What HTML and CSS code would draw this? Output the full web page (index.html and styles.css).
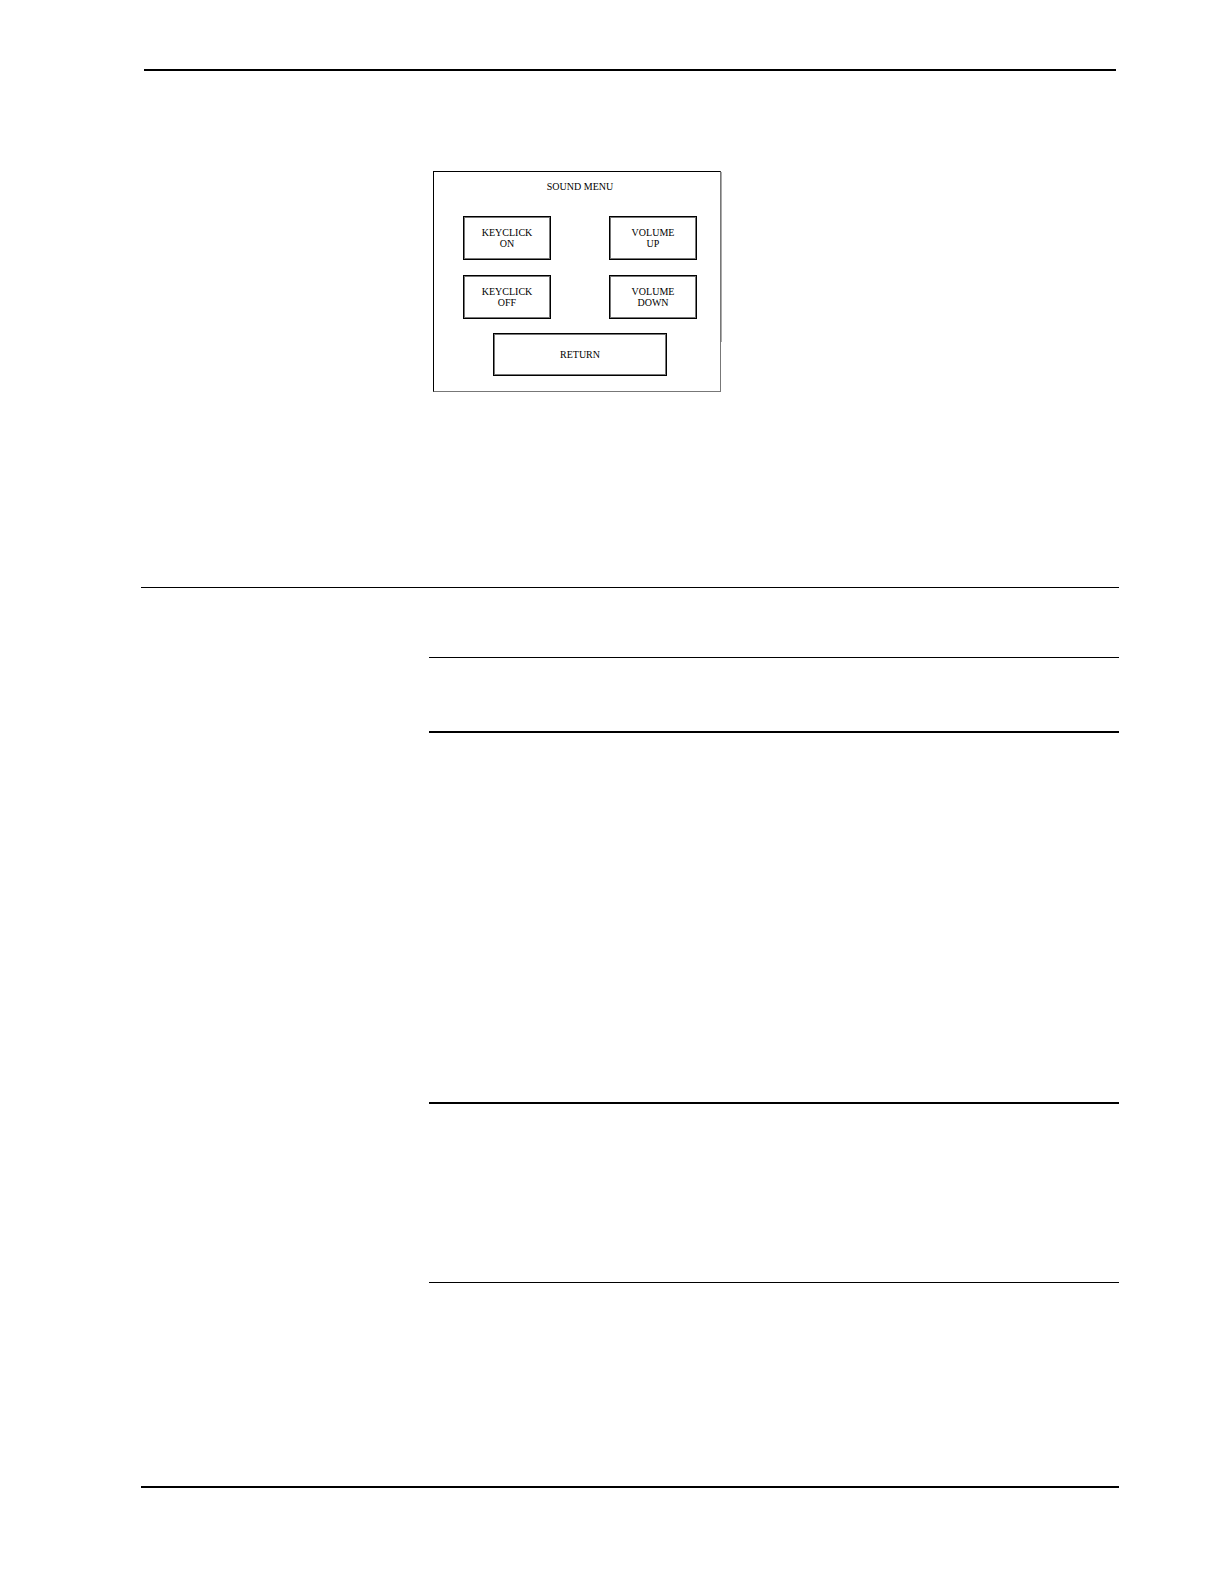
FILE: index.html
```html
<!DOCTYPE html>
<html lang="en">
<head>
<meta charset="utf-8">
<title>Sound Menu</title>
<link rel="stylesheet" href="styles.css">
</head>
<body>
<main class="page">
  <header class="page-head"></header>
  <section class="figure-area">
    <div class="panel">
      <h1 class="panel-title">SOUND MENU</h1>
      <div class="keys">
        <button class="key" type="button">KEYCLICK<br>ON</button>
        <button class="key" type="button">VOLUME<br>UP</button>
        <button class="key" type="button">KEYCLICK<br>OFF</button>
        <button class="key" type="button">VOLUME<br>DOWN</button>
      </div>
      <button class="key key-wide" type="button">RETURN</button>
    </div>
  </section>
  <section class="topic">
    <div class="row row-heading"></div>
    <div class="row row-intro"></div>
    <div class="row row-body"></div>
    <div class="row row-notes"></div>
    <div class="row row-last"></div>
  </section>
</main>
</body>
</html>
```
FILE: styles.css
```css
* {
  box-sizing: border-box;
}

body {
  margin: 0;
  background: #fff;
  color: #000;
  font-family: "Liberation Serif", "Times New Roman", serif;
  font-size: 10px;
  line-height: 11px;
}

.page {
  padding: 0 105px 96px 141px;
}

.page-head {
  height: 71px;
  margin: 0 3px;
  border-bottom: 2px solid #000;
}

.figure-area {
  padding: 100px 0 195px 292px;
}

.panel {
  position: relative;
  width: 288px;
  padding: 9px 23px 14px 29px;
  border: 1px solid #000;
  border-right-color: #777;
  border-bottom-color: #777;
}

/* soft outer edge beside the upper part of the frame */
.panel::after {
  content: "";
  position: absolute;
  top: 0;
  right: -2px;
  width: 1px;
  height: 170px;
  background: #aaa;
}

.panel-title {
  margin: 0 0 24px;
  font-size: 10px;
  font-weight: 400;
  text-align: center;
}

.keys {
  display: grid;
  grid-template-columns: 88px 88px;
  justify-content: space-between;
  row-gap: 15px;
}

.key {
  height: 44px;
  padding: 0;
  border: 1px solid #000;
  border-radius: 0;
  background: #fff;
  box-shadow: inset 0 0 0 1px #777;
  color: #000;
  font: inherit;
  text-align: center;
}

.key-wide {
  display: block;
  width: 174px;
  height: 43px;
  margin: 14px auto 1px;
}

.topic {
  border-top: 1px solid #000;
  border-bottom: 2px solid #000;
}

.row {
  margin-left: 288px;
}

.row-heading {
  min-height: 70px;
  border-bottom: 1px solid #000;
}

.row-intro {
  min-height: 75px;
  border-bottom: 2px solid #000;
}

.row-body {
  min-height: 371px;
  border-bottom: 2px solid #000;
}

.row-notes {
  min-height: 179px;
  border-bottom: 1px solid #000;
}

.row-last {
  min-height: 203px;
}
```
